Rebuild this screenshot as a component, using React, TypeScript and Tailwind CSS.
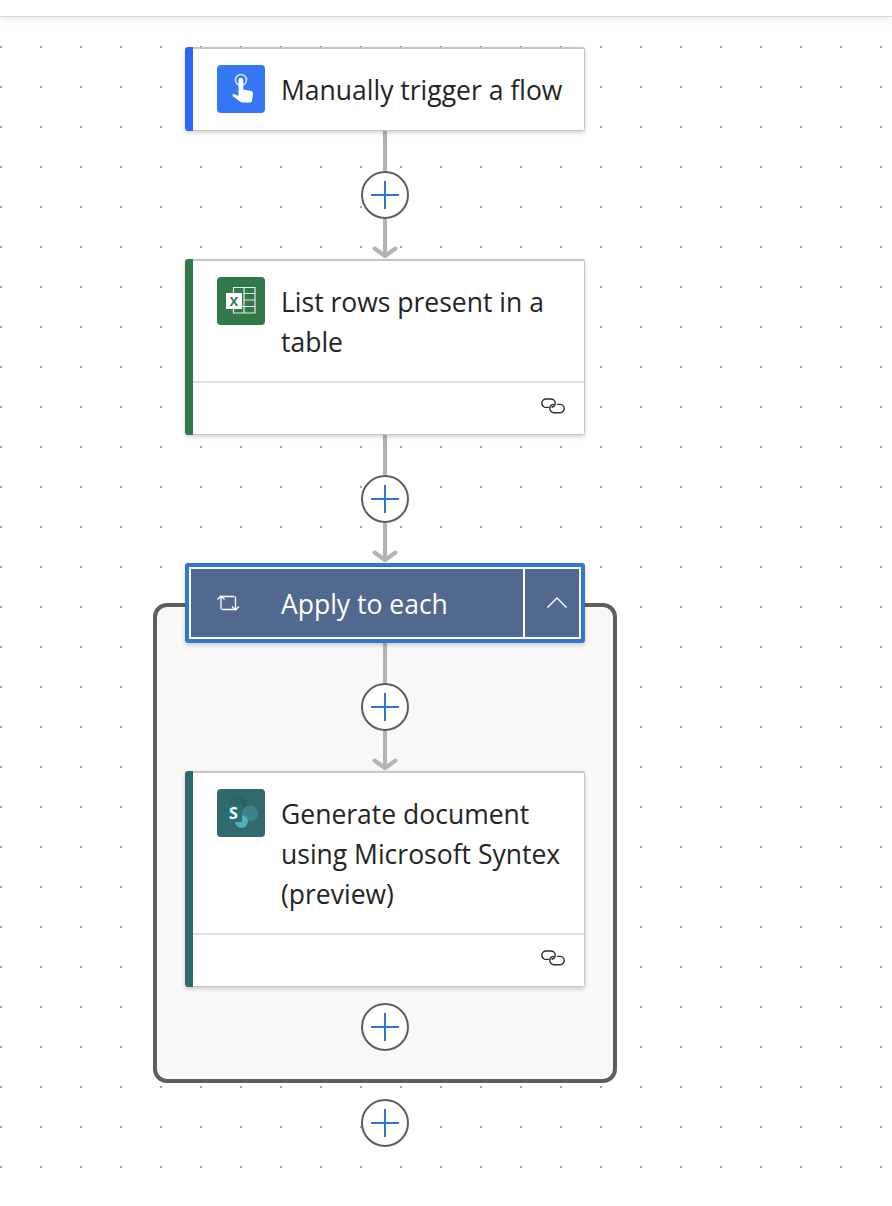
import React from "react";

function Plus() {
  return (
    <div className="flex h-12 w-12 shrink-0 items-center justify-center rounded-full border-2 border-[#605e5c] bg-white">
      <svg width="28" height="28" viewBox="0 0 28 28">
        <path d="M14 0V28M0 14H28" stroke="#2f76d2" strokeWidth="2" fill="none" />
      </svg>
    </div>
  );
}

function Stem() {
  return <div className="h-10 w-1 shrink-0 bg-[#b3b2b7]" />;
}

function ArrowStem() {
  return (
    <svg width="26" height="40" viewBox="0 0 26 40" className="relative z-10 block shrink-0">
      <path d="M13 0V38" stroke="#b3b2b7" strokeWidth="4" fill="none" />
      <path d="M2.5 29.5L13 37L23.5 29.5" stroke="#b3b2b7" strokeWidth="4" strokeLinecap="round" strokeLinejoin="round" fill="none" />
    </svg>
  );
}

function Connector() {
  return (
    <div className="flex flex-col items-center">
      <Stem />
      <Plus />
      <ArrowStem />
    </div>
  );
}

function HandIcon() {
  return (
    <svg width="48" height="48" viewBox="0 0 48 48" className="block">
      <rect width="48" height="48" rx="4" fill="#3478f6" />
      <circle cx="24" cy="15" r="5.5" fill="none" stroke="#d6e4fd" strokeWidth="1.5" />
      <path
        d="M21.5 15.2a2.4 2.4 0 0 1 4.8 0V24.5l7.6 1.6c1.4.3 2.3 1.4 2.1 2.8l-.9 6.5c-.2 1.4-1.2 2.1-2.4 2.1h-7.4c-1.2 0-2.2-.5-3-1.4L15.6 31c-.7-.9.6-2.4 2-1.7l3.9 1.7z"
        fill="#fff"
      />
    </svg>
  );
}

function ExcelIcon() {
  return (
    <svg width="48" height="48" viewBox="0 0 48 48" className="block">
      <rect width="48" height="48" rx="4" fill="#31784a" />
      <path
        d="M16.5 10.5H38V36H16.5ZM27 10.5V36M27 16.5H38M27 23H38M27 29.5H38M16.5 29.5H27"
        fill="none"
        stroke="#e4efe8"
        strokeWidth="1.2"
      />
      <rect x="9" y="16" width="16" height="16" fill="#fff" />
      <text x="17" y="29" textAnchor="middle" fontFamily="'Open Sans',sans-serif" fontWeight="600" fontSize="16" fill="#31784a">
        x
      </text>
    </svg>
  );
}

function SharePointIcon() {
  return (
    <svg width="48" height="48" viewBox="0 0 48 48" className="block">
      <rect width="48" height="48" rx="4" fill="#31696d" />
      <circle cx="21" cy="16" r="9.5" fill="#2a6468" />
      <circle cx="33" cy="24.5" r="8" fill="#3a8489" />
      <circle cx="24.5" cy="32.5" r="6.5" fill="#4fb2bb" />
      <rect x="8" y="16" width="17" height="17" rx="1" fill="#277176" />
      <text x="16.5" y="30" textAnchor="middle" fontFamily="'Open Sans',sans-serif" fontWeight="700" fontSize="16" fill="#fff">
        S
      </text>
    </svg>
  );
}

function LinkIcon() {
  return (
    <svg width="24" height="16" viewBox="0 0 24 16" className="block">
      <path
        d="M7.5 9.4H5a4.2 4.2 0 0 1 0-8.4h5a4.2 4.2 0 0 1 4.2 4.2c0 2-1.3 3.6-3.2 4"
        fill="none"
        stroke="#323130"
        strokeWidth="1.4"
        strokeLinecap="round"
      />
      <path
        d="M16.5 6.4H19a4.2 4.2 0 0 1 0 8.4h-6a4.2 4.2 0 0 1-4.2-4.2c0-2 1.4-3.8 3.4-4.2"
        fill="none"
        stroke="#323130"
        strokeWidth="1.4"
        strokeLinecap="round"
      />
    </svg>
  );
}

function Card({
  bar,
  icon,
  title,
  footer,
}: {
  bar: string;
  icon: React.ReactNode;
  title: React.ReactNode;
  footer?: boolean;
}) {
  return (
    <div className="relative flex w-[400px] shrink-0 overflow-hidden rounded-[3px] shadow-[0_2px_4px_rgba(0,0,0,0.18)]">
      <div className={`w-2 shrink-0 ${bar}`} />
      <div className="min-w-0 flex-1 border-t-2 border-r border-b border-[#c6c6c6] bg-white">
        <div className={`flex gap-4 pl-6 pr-2 pt-4 ${footer ? "pb-[19px]" : "pb-[17px]"}`}>
          <div className="shrink-0">{icon}</div>
          <div className="mt-[5px] whitespace-nowrap text-[26.5px] leading-[40px] text-[#252423]">{title}</div>
        </div>
        {footer && (
          <div className="flex h-[53px] items-start justify-end border-t-2 border-[#e1dfdd] pr-[19px] pt-[15px]">
            <LinkIcon />
          </div>
        )}
      </div>
    </div>
  );
}

export default function App() {
  return (
    <div className="h-[1206px] w-[892px] overflow-hidden bg-white bg-[conic-gradient(from_270deg_at_2px_2px,#a3a3a3_25%,transparent_0)] bg-[size:40px_40px] bg-[position:0_6px] font-['Open_Sans',sans-serif]">
      <div className="relative z-20 h-[17px] border-b border-[#d6d6d6] bg-white shadow-[0_3px_8px_rgba(0,0,0,0.08)]" />
      <div className="ml-[185px] flex w-[400px] flex-col items-center pt-[30px]">
        <Card bar="bg-[#2b66f6]" icon={<HandIcon />} title="Manually trigger a flow" />
        <Connector />
        <Card
          bar="bg-[#31784a]"
          icon={<ExcelIcon />}
          title={
            <>
              List rows present in a
              <br />
              table
            </>
          }
          footer
        />
        <Connector />
        <div className="relative z-10 flex h-20 w-[400px] shrink-0 rounded-[3px] border-4 border-[#3077d0] shadow-[0_2px_4px_rgba(0,0,0,0.18)]">
          <div className="flex flex-1 border-2 border-white bg-[#51698e]">
            <div className="flex flex-1 items-center gap-[41px] pl-[25px]">
              <svg width="24" height="18" viewBox="0 0 24 18" className="block shrink-0">
                <path
                  d="M5 15.5V2.5H18.5M1.5 5.5L5 2L8.5 5.5M19.5 2.5V15.5H6M16 12.5L19.5 16L23 12.5"
                  fill="none"
                  stroke="#fff"
                  strokeWidth="1.3"
                />
              </svg>
              <span className="mt-[2px] text-[26.5px] leading-[40px] text-white">Apply to each</span>
            </div>
            <div className="flex w-[56px] items-center justify-center border-l-2 border-white pb-[2px] pl-[10px]">
              <svg width="20" height="11" viewBox="0 0 20 11" className="block">
                <path d="M0.5 10.5L10 1L19.5 10.5" fill="none" stroke="#fff" strokeWidth="1.4" />
              </svg>
            </div>
          </div>
        </div>
        <div className="mt-[-40px] flex w-[464px] shrink-0 flex-col items-center rounded-[14px] border-4 border-[#605e5c] bg-[#f9f8f6] pb-[28px] pt-[36px]">
          <Connector />
          <Card
            bar="bg-[#30686c]"
            icon={<SharePointIcon />}
            title={
              <>
                Generate document
                <br />
                using Microsoft Syntex
                <br />
                (preview)
              </>
            }
            footer
          />
          <div className="mt-4">
            <Plus />
          </div>
        </div>
        <div className="mt-4">
          <Plus />
        </div>
      </div>
    </div>
  );
}
